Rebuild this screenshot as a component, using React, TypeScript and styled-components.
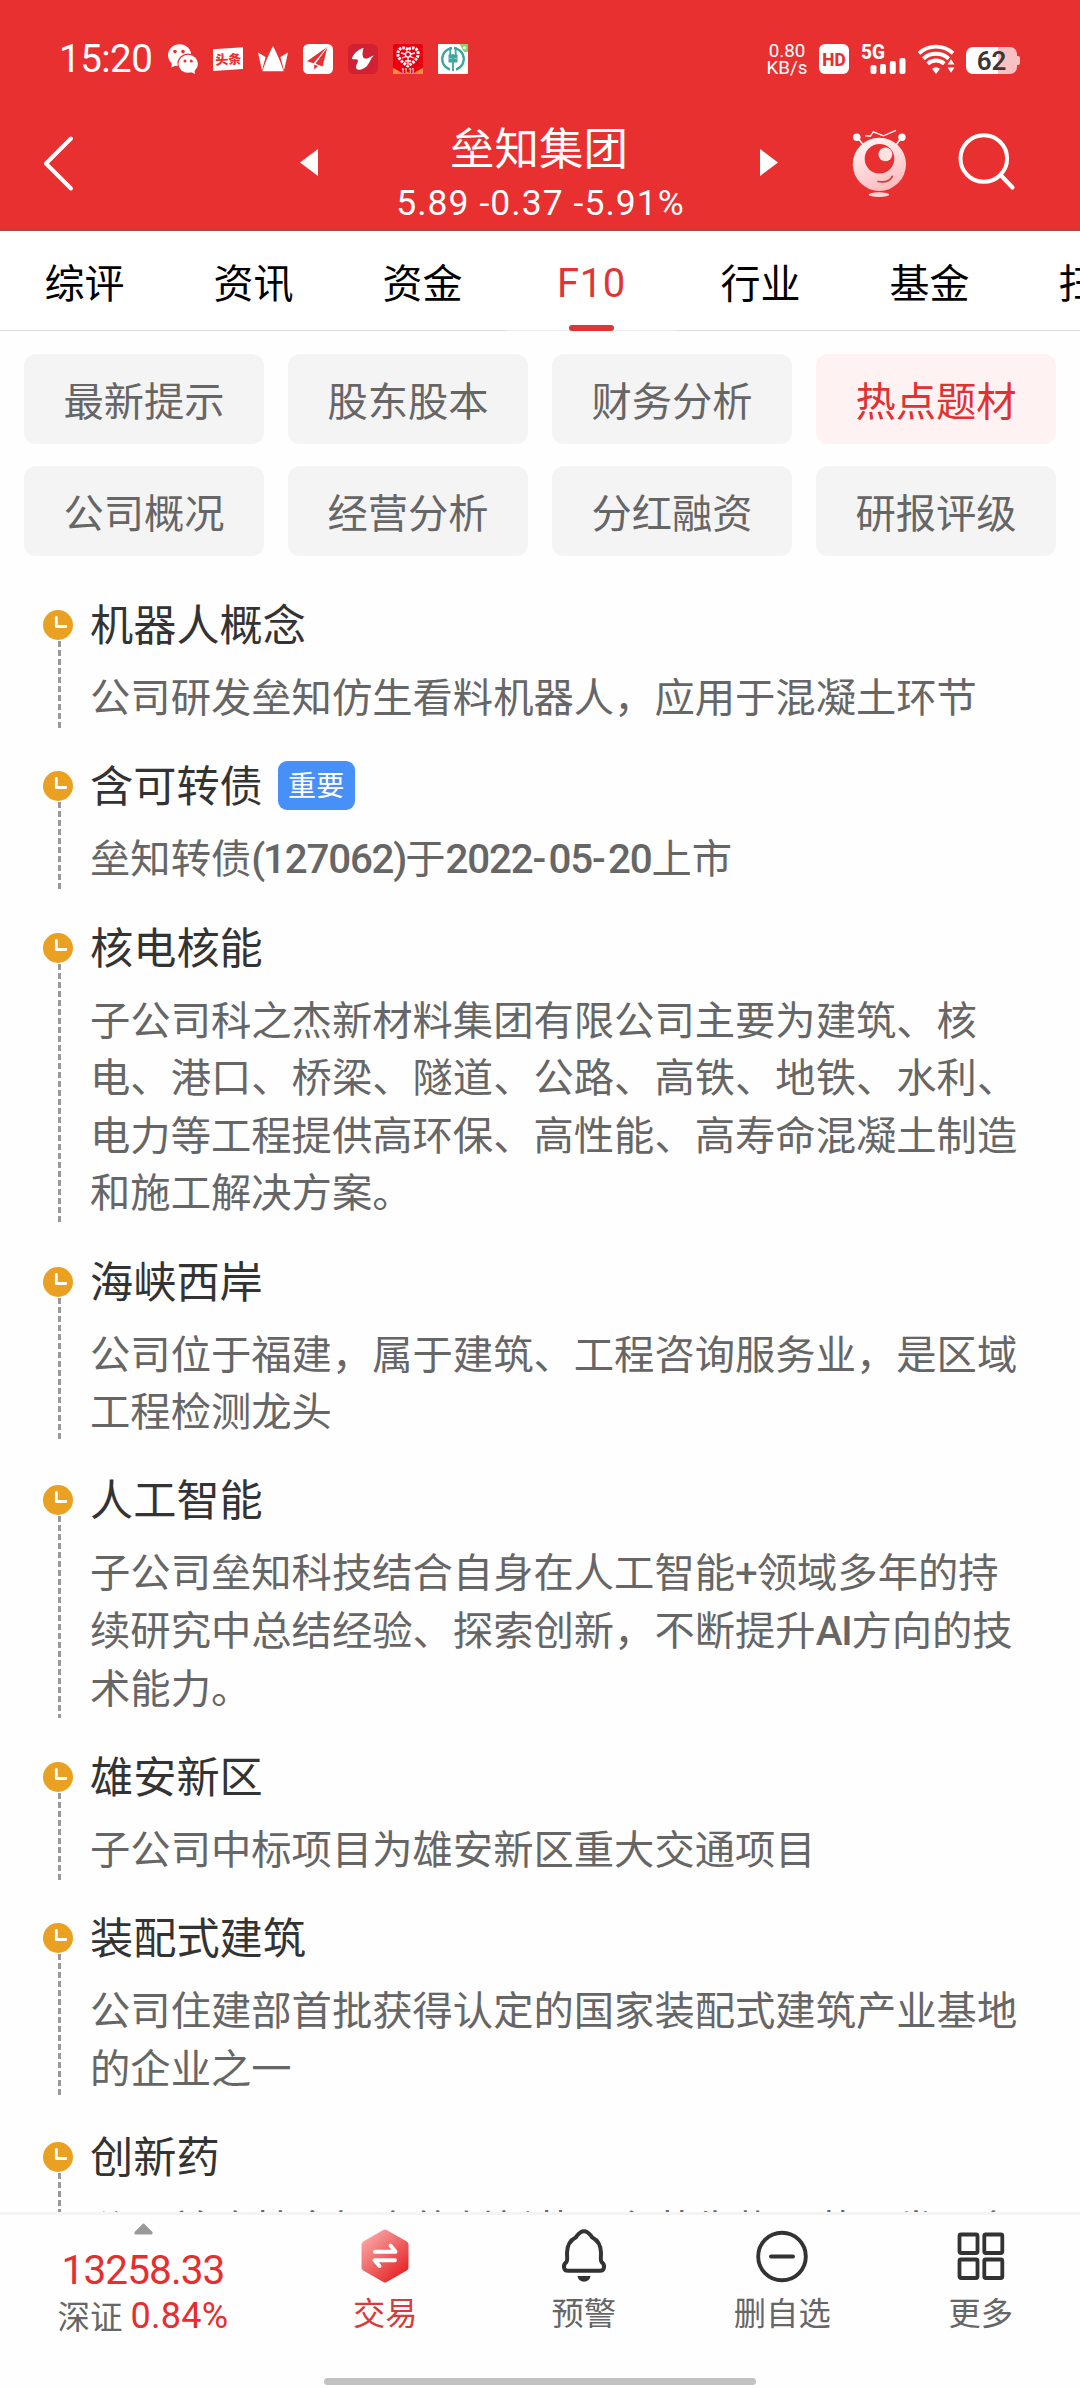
import React from 'react';
import styled, { createGlobalStyle, css } from 'styled-components';

const RED = '#e83031';

const GlobalStyle = createGlobalStyle`
  * { box-sizing: border-box; }
  html, body { margin: 0; padding: 0; background: #fefefe; }
  body { font-family: "Noto Sans CJK SC", "Noto Sans", sans-serif; overflow: hidden; }
`;

const latin = css`
  font-family: Roboto, "Noto Sans CJK SC", sans-serif;
`;

const Screen = styled.div`
  width: 1080px;
  height: 2388px;
  display: flex;
  flex-direction: column;
  overflow: hidden;
  background: #fefefe;
`;

/* ---------- header ---------- */

const Header = styled.header`
  height: 231px;
  flex: none;
  display: flex;
  flex-direction: column;
  background: ${RED};
  border-bottom: 1px solid #a04c4c;
  color: #fff;
`;

const StatusBar = styled.div`
  height: 118px;
  flex: none;
  display: flex;
  justify-content: space-between;
  align-items: center;
  padding: 0 60px 0 59px;
  svg { display: block; flex: none; }
`;

const StatusGroup = styled.div<{ $gap: number }>`
  display: flex;
  align-items: center;
  gap: ${(p) => p.$gap}px;
`;

const Time = styled.span`
  ${latin}
  width: 94px;
  font-size: 38.5px;
  line-height: 44px;
  letter-spacing: -0.5px;
  white-space: nowrap;
`;

const Speed = styled.div`
  ${latin}
  width: 42px;
  padding-top: 1px;
  font-size: 18.8px;
  line-height: 17px;
  text-align: center;
  white-space: nowrap;
`;

const Battery = styled.div`
  ${latin}
  display: flex;
  align-items: center;
  margin-top: 3px;
  &::after {
    content: '';
    width: 3px;
    height: 9px;
    border-radius: 0 2px 2px 0;
    background: #f9c1c1;
  }
`;

const BatteryBody = styled.div`
  width: 51px;
  height: 27px;
  border-radius: 7px;
  background: linear-gradient(90deg, #fff 0 32px, #f9c1c1 32px);
  color: #3c3636;
  font-size: 26px;
  font-weight: 600;
  line-height: 28px;
  text-align: center;
`;

const NavBar = styled.div`
  flex: 1;
  display: flex;
  align-items: stretch;
  svg { display: block; flex: none; }
`;

const BackSlot = styled.div`
  width: 300px;
  padding: 17px 0 0 42px;
`;

const StockSwitch = styled.div`
  width: 478px;
  display: flex;
  justify-content: space-between;
  > svg { margin-top: 31px; }
`;

const StockTitle = styled.div`
  display: flex;
  flex-direction: column;
  align-items: center;
  padding-top: 3px;
`;

const StockName = styled.div`
  font-size: 44.5px;
  line-height: 50px;
`;

const StockQuote = styled.div`
  ${latin}
  margin: 12px 0 0 3px;
  font-size: 35.5px;
  line-height: 40px;
  letter-spacing: 1.05px;
  white-space: nowrap;
`;

const NavActions = styled.div`
  display: flex;
  gap: 49px;
  padding: 11px 0 0 73px;
`;

/* ---------- tabs ---------- */

const Tabs = styled.nav`
  height: 100px;
  flex: none;
  display: flex;
  border-bottom: 1px solid #dedede;
  background: #fff;
`;

const Tab = styled.div<{ $active?: boolean }>`
  position: relative;
  width: 169px;
  height: 100px;
  flex: none;
  text-align: center;
  font-size: 40px;
  line-height: 101px;
  color: #000;
  ${(p) =>
    p.$active &&
    css`
      ${latin}
      line-height: 106px;
      letter-spacing: 0.6px;
      color: #df3535;
      border-bottom: 1px solid #eee;
      &::after {
        content: '';
        position: absolute;
        left: 62px;
        bottom: -1px;
        width: 45px;
        height: 6px;
        border-radius: 3px;
        background: #df3535;
      }
    `}
`;

/* ---------- section grid ---------- */

const Sections = styled.div`
  flex: none;
  display: grid;
  grid-template-columns: repeat(4, 240px);
  grid-auto-rows: 90px;
  gap: 22px 24px;
  padding: 23px 24px 0;
`;

const Section = styled.div<{ $active?: boolean }>`
  border-radius: 12px;
  background: ${(p) => (p.$active ? '#fef3f2' : '#f4f4f4')};
  color: ${(p) => (p.$active ? '#e03232' : '#666')};
  font-size: 40.3px;
  line-height: 90px;
  text-align: center;
`;

/* ---------- timeline ---------- */

const Timeline = styled.main`
  flex: 1;
  min-height: 0;
  overflow: hidden;
  padding: 40px 0 0 43px;
`;

const Entry = styled.article<{ $lines: number }>`
  display: flex;
  gap: 17px;
  height: ${(p) => 103.68 + p.$lines * 57.6}px;
`;

const Rail = styled.div<{ $lines: number }>`
  width: 30px;
  display: flex;
  flex-direction: column;
  align-items: center;
  padding-top: 14px;
  svg { display: block; flex: none; }
  &::after {
    content: '';
    width: 3px;
    height: ${(p) => 29 + p.$lines * 57.6}px;
    margin: 1px 0 0 2px;
    background: repeating-linear-gradient(180deg, #999 0 6px, transparent 6px 9px);
  }
`;

const EntryBody = styled.div`
  flex: 1;
  min-width: 0;
`;

const EntryTitle = styled.h2`
  display: flex;
  align-items: center;
  gap: 15px;
  height: 56px;
  margin: 0;
  font-size: 43.2px;
  font-weight: 400;
  line-height: 52px;
  color: #333;
  > span:first-child { margin-top: -4px; }
`;

const Badge = styled.span`
  width: 77px;
  height: 49px;
  border-radius: 9px;
  background: #4690f7;
  color: #fff;
  font-size: 28.2px;
  line-height: 46px;
  text-align: center;
`;

const EntryText = styled.p`
  margin: 14px 0 0;
  font-size: 40.32px;
  line-height: 57.6px;
  color: #666;
  white-space: pre;
`;

const Num = styled.span<{ $track?: number; $weight?: number }>`
  font-family: Roboto, sans-serif;
  font-weight: ${(p) => p.$weight ?? 500};
  letter-spacing: ${(p) => p.$track ?? -1.2}px;
  line-height: 0;
`;

/* ---------- bottom bar ---------- */

const Bottom = styled.footer`
  height: 176px;
  flex: none;
  display: flex;
  flex-direction: column;
  align-items: center;
  border-top: 3px solid #f4f4f4;
  background: #fefefe;
  svg { display: block; flex: none; }
`;

const BottomRow = styled.div`
  width: 1080px;
  height: 163px;
  display: flex;
`;

const IndexCell = styled.div`
  width: 286px;
  display: flex;
  flex-direction: column;
  align-items: center;
  padding-top: 8px;
`;

const IndexValue = styled.div`
  ${latin}
  margin-top: 12px;
  font-size: 40.5px;
  line-height: 46px;
  letter-spacing: -0.9px;
  color: #e62e2f;
`;

const IndexChange = styled.div`
  display: flex;
  gap: 8px;
  margin-top: 2px;
  font-size: 32.5px;
  line-height: 40px;
  color: #666;
  span {
    ${latin}
    font-size: 36px;
    letter-spacing: 0.3px;
    line-height: 42px;
    color: #e62e2f;
  }
`;

const Action = styled.div<{ $accent?: boolean }>`
  width: 198.5px;
  display: flex;
  flex-direction: column;
  align-items: center;
  padding-top: 14px;
  gap: 6px;
  font-size: 32.3px;
  line-height: 44px;
  color: ${(p) => (p.$accent ? '#d93b3b' : '#666')};
`;

const HomeIndicator = styled.div`
  width: 432px;
  height: 7px;
  border-radius: 4px;
  background: #c2c2c2;
`;

/* ---------- icons ---------- */

const WeChat = () => (
  <svg width="30" height="30" viewBox="0 0 30 30">
    <ellipse cx="11.6" cy="11.2" rx="11.6" ry="10.9" fill="#fff" />
    <path d="M4 18 L3.4 23.6 L10 20.5Z" fill="#fff" />
    <circle cx="7" cy="7.6" r="1.8" fill={RED} />
    <circle cx="15" cy="7.6" r="1.8" fill={RED} />
    <ellipse cx="20.2" cy="19.6" rx="10.8" ry="10.2" fill={RED} />
    <ellipse cx="20.2" cy="19.8" rx="9.8" ry="9" fill="#fff" />
    <path d="M21 27 L27 30 L26 24Z" fill="#fff" />
    <circle cx="17" cy="17" r="1.5" fill={RED} />
    <circle cx="23.3" cy="17" r="1.5" fill={RED} />
  </svg>
);

const Toutiao = () => (
  <svg width="30" height="30" viewBox="0 0 30 30">
    <path d="M0 5.2 L30 3.2 V25 L0 27Z" fill="#fff" />
    <text x="2.2" y="20.2" fontSize="13" fontWeight="900" fill={RED} transform="rotate(-3 15 15)">头条</text>
  </svg>
);

const Crown = () => (
  <svg width="30" height="30" viewBox="0 0 30 30">
    <path d="M0 8.6 L7.6 13 L4 26.5Z M30 8.6 L22.4 13 L26 26.5Z" fill="#fff" />
    <path d="M15 2 C17.5 7 22.5 17 25.6 27.2 H4.4 C7.5 17 12.5 7 15 2Z" fill="#fff" />
  </svg>
);

const Plane = () => (
  <svg width="30" height="30" viewBox="0 0 30 30">
    <rect width="30" height="30" rx="5.5" fill="#fff" />
    <path d="M24.5 2.8 L4 17.2 L10.6 19.2Z M24.5 2.8 L12.4 19.8 L19.6 22.6Z M11 20.4 L11.4 25.6 L15 22Z" fill={RED} />
    <path d="M24.5 2.8 L11 20.8" stroke="#fff" strokeWidth="0.9" />
  </svg>
);

const Bird = () => (
  <svg width="30" height="30" viewBox="0 0 30 30">
    <rect width="30" height="30" rx="5.5" fill="#d12233" />
    <path d="M15.5 4 C11 5 5 9.5 4 14.5 C4.5 16.5 8.5 14 9.8 16 C10.6 18.5 7 21.5 8.3 24.5 C10.5 27 15 25.5 18.5 22.5 C21.5 19.5 22 15 26 11.2 C23 12.2 20 15 17.2 14.6 C13.5 14 14.5 8 15.5 4Z" fill="#fff" />
  </svg>
);

const Heart = () => (
  <svg width="30" height="30" viewBox="0 0 30 30">
    <rect width="30" height="30" rx="2" fill="#e8000f" />
    <path d="M0 24 Q3 25 9 29 H21 Q27 25 30 24 V30 H0Z" fill="#f78a3c" />
    <path
      d="M15 6 C12 2.5 5 3 4.8 10 C5 15 11 19.5 15 22 C19 19.5 25 15 25.2 10 C25 3 18 2.5 15 6Z"
      fill="none"
      stroke="#fff"
      strokeWidth="3"
      strokeDasharray="2.6 1"
    />
    <circle cx="15" cy="10.5" r="2.6" fill="none" stroke="#fff" strokeWidth="1.4" />
    <path d="M8 9 L12 10 M18 10 L22 9 M9 14 L13 12.5 M17 12.5 L21 14 M15 13 V20 M12 17 H18" stroke="#fff" strokeWidth="1.3" />
    <text x="15" y="28.6" fontSize="6.6" fontWeight="700" fontFamily="Roboto, sans-serif" textAnchor="middle" textLength="13" lengthAdjust="spacingAndGlyphs" fill="#fff">11.11</text>
  </svg>
);

const BankIcon = () => (
  <svg width="30" height="30" viewBox="0 0 30 30">
    <rect width="30" height="30" fill="#fff" />
    <circle cx="15" cy="15" r="10.8" fill="none" stroke="#40a59b" strokeWidth="2.3" />
    <path d="M12.3 3 V11 M17.7 3 V11" stroke="#40a59b" strokeWidth="1.8" />
    <path d="M10.5 10.5 H19.5 V18.5 H10.5Z" fill="#40a59b" />
    <path d="M15 3 V10 M13 19 V27 M17 19 V27" stroke="#fff" strokeWidth="2" />
    <path d="M10.5 14.5 H19.5" stroke="#9ed4ce" strokeWidth="0.8" />
    <path d="M15 10 V25" stroke="#40a59b" strokeWidth="1.8" />
    <path d="M21.5 0 H30 V8 H26Z" fill="#8bd06c" />
    <circle cx="26.5" cy="3.8" r="1.7" fill="#d9f2cd" />
  </svg>
);

const HdSvg = styled.svg`
  margin-right: 1px;
`;

const HdIcon = () => (
  <HdSvg width="30" height="30" viewBox="0 0 30 30">
    <rect width="30" height="30" rx="6" fill="#fff" />
    <text x="15" y="21.7" fontSize="18.5" fontWeight="800" fontFamily="Roboto, sans-serif" textAnchor="middle" textLength="23.5" lengthAdjust="spacingAndGlyphs" fill={RED}>HD</text>
  </HdSvg>
);

const SignalSvg = styled.svg`
  overflow: visible;
`;

const Signal = () => (
  <SignalSvg width="46" height="30" viewBox="0 0 46 30">
    <text x="0" y="14.5" fontSize="20" fontWeight="800" fontFamily="Roboto, sans-serif" textLength="24" lengthAdjust="spacingAndGlyphs" fill="#fff">5G</text>
    <g fill="#fff">
      <rect x="9.5" y="21" width="6" height="9" rx="2" />
      <rect x="19" y="20" width="6" height="10" rx="2" />
      <rect x="28.8" y="17" width="6" height="13" rx="2" />
      <rect x="38.5" y="14" width="6" height="16" rx="2" />
    </g>
  </SignalSvg>
);

const Wifi = () => (
  <svg width="37" height="30" viewBox="0 0 37 30">
    <g fill="none" stroke="#fff" strokeWidth="3.9">
      <path d="M1 9.3 A25 25 0 0 1 35 9.3" />
      <path d="M5.3 14.7 A18.7 18.7 0 0 1 30.7 14.7" />
      <path d="M9.7 19.7 A12.4 12.4 0 0 1 26.3 19.7" />
    </g>
    <path d="M14 24.8 Q18 21.8 22 24.8 L18 30Z" fill="#fff" />
    <path d="M28 22 L33 13.5 L38 22 V30 H28Z" fill={RED} />
    <path d="M29.5 20.5 L33 15.3 L36.5 20.5Z M29.5 23.5 L33 28.8 L36.5 23.5Z" fill="#fff" />
  </svg>
);

const Back = () => (
  <svg width="34" height="58" viewBox="0 0 34 58">
    <path d="M29 3.5 L4 28.5 L29 53.5" fill="none" stroke="#fff" strokeWidth="4" strokeLinecap="round" strokeLinejoin="round" />
  </svg>
);

const Triangle = ({ flip }: { flip?: boolean }) => (
  <svg width="18" height="27" viewBox="0 0 18 27">
    <path d={flip ? 'M0 0 L18 13.5 L0 27Z' : 'M18 0 L0 13.5 L18 27Z'} fill="#fff" />
  </svg>
);

const Robot = () => (
  <svg width="56" height="70" viewBox="851 129 56 70">
    <defs>
      <linearGradient id="robot" x1="0.3" y1="0" x2="0.7" y2="1">
        <stop offset="0" stopColor="#fff5f5" />
        <stop offset="1" stopColor="#fdb9bb" />
      </linearGradient>
    </defs>
    <path d="M857 137 L863.5 145 M902 137 L896 145" stroke="#fff" strokeWidth="1.5" />
    <circle cx="856.8" cy="137.3" r="3.7" fill="#fff" />
    <circle cx="902" cy="137.3" r="3.7" fill="#fff" />
    <path d="M865 135.8 L870.5 136 L873.3 131.8 L883.5 135.8 L896 130.3" fill="none" stroke="#fff" strokeWidth="1.3" />
    <circle cx="879.4" cy="164.3" r="26.6" fill="url(#robot)" />
    <circle cx="879.5" cy="158.8" r="14.8" fill={RED} />
    <circle cx="885.4" cy="154.3" r="6.9" fill="#ffe3e3" />
    <path d="M878 181.5 Q889 183.5 892.3 176.3" fill="none" stroke="#d9393b" strokeWidth="1.7" strokeLinecap="round" />
    <ellipse cx="879" cy="194.6" rx="10.3" ry="2.3" fill="#ffd6d6" />
  </svg>
);

const Search = () => (
  <svg width="60" height="62" viewBox="956 131 60 62">
    <circle cx="983.8" cy="160.5" r="23.3" fill="none" stroke="#fff" strokeWidth="4" />
    <path d="M1001.5 178 L1012.5 189.5" stroke="#fff" strokeWidth="4.2" strokeLinecap="round" />
  </svg>
);

const Clock = () => (
  <svg width="30" height="30" viewBox="0 0 30 30">
    <circle cx="15" cy="15" r="15" fill="#eaa020" />
    <path d="M13.3 7.3 V16.5 H22.8" fill="none" stroke="#fff" strokeWidth="2.8" strokeLinecap="round" strokeLinejoin="round" />
  </svg>
);

const UpMark = () => (
  <svg width="19" height="12" viewBox="0 0 19 12">
    <path d="M9.5 1.5 L17.5 9.5 V10.5 H1.5 V9.5Z" fill="#999" stroke="#999" strokeWidth="2" strokeLinejoin="round" />
  </svg>
);

const TradeIcon = () => (
  <svg width="48" height="54" viewBox="0 0 48 54">
    <defs>
      <linearGradient id="trade" gradientUnits="userSpaceOnUse" x1="4" y1="6" x2="42" y2="46">
        <stop offset="0" stopColor="#f9a9a9" />
        <stop offset="1" stopColor="#e72527" />
      </linearGradient>
    </defs>
    <path d="M24 4 L44 15.5 V38.5 L24 50 L4 38.5 V15.5Z" fill="url(#trade)" stroke="url(#trade)" strokeWidth="7" strokeLinejoin="round" />
    <path d="M14 22.7 H34.5 L29.5 16.5 M34 31.3 H13.5 L18.5 37" fill="none" stroke="#fff" strokeWidth="3.9" strokeLinecap="round" strokeLinejoin="round" />
  </svg>
);

const Bell = () => (
  <svg width="46" height="54" viewBox="0 0 46 54">
    <path
      d="M7 41.8 C2.5 41.8 1.5 36 5.3 33.2 C6.8 31.5 6 28 6 24 C6 16 9.5 11 15 8.2 C17 5.5 18.5 2.2 23 2.2 C27.5 2.2 29 5.5 31 8.2 C36.5 11 40 16 40 24 C40 28 39.2 31.5 40.7 33.2 C44.5 36 43.5 41.8 39 41.8 Z"
      fill="none"
      stroke="#333"
      strokeWidth="4"
      strokeLinejoin="round"
    />
    <path d="M16.5 47 H29.5 C28.5 54.5 17.5 54.5 16.5 47Z" fill="#333" />
  </svg>
);

const Remove = () => (
  <svg width="54" height="54" viewBox="0 0 54 54">
    <circle cx="27" cy="27.5" r="23.8" fill="none" stroke="#333" strokeWidth="3.9" />
    <path d="M16 27.5 H38" stroke="#333" strokeWidth="4" strokeLinecap="round" />
  </svg>
);

const More = () => (
  <svg width="48" height="54" viewBox="0 0 48 54">
    <g fill="none" stroke="#333" strokeWidth="3.8">
      <rect x="2.5" y="5.5" width="18" height="18.5" rx="1.5" />
      <rect x="27.3" y="5.5" width="18" height="18.5" rx="1.5" />
      <rect x="2.5" y="30.5" width="18" height="18.5" rx="1.5" />
      <rect x="27.3" y="30.5" width="18" height="18.5" rx="1.5" />
    </g>
  </svg>
);

/* ---------- data ---------- */

const tabs = ['综评', '资讯', '资金', 'F10', '行业', '基金', '扫雷'];

const sections = ['最新提示', '股东股本', '财务分析', '热点题材', '公司概况', '经营分析', '分红融资', '研报评级'];

interface Topic {
  title: string;
  important?: boolean;
  lines: React.ReactNode[];
}

const topics: Topic[] = [
  { title: '机器人概念', lines: ['公司研发垒知仿生看料机器人，应用于混凝土环节'] },
  {
    title: '含可转债',
    important: true,
    lines: [
      <>
        垒知转债<Num $track={-2.2}>(</Num><Num>127062</Num><Num $track={-2.2}>)</Num>于
        <Num>2022</Num><Num $track={2.4}>-</Num><Num>05</Num><Num $track={2.4}>-</Num><Num>20</Num>上市
      </>,
    ],
  },
  {
    title: '核电核能',
    lines: [
      '子公司科之杰新材料集团有限公司主要为建筑、核',
      '电、港口、桥梁、隧道、公路、高铁、地铁、水利、',
      '电力等工程提供高环保、高性能、高寿命混凝土制造',
      '和施工解决方案。',
    ],
  },
  { title: '海峡西岸', lines: ['公司位于福建，属于建筑、工程咨询服务业，是区域', '工程检测龙头'] },
  {
    title: '人工智能',
    lines: [
      <>子公司垒知科技结合自身在人工智能<Num $weight={400}>+</Num>领域多年的持</>,
      <>续研究中总结经验、探索创新，不断提升<Num>AI</Num>方向的技</>,
      '术能力。',
    ],
  },
  { title: '雄安新区', lines: ['子公司中标项目为雄安新区重大交通项目'] },
  { title: '装配式建筑', lines: ['公司住建部首批获得认定的国家装配式建筑产业基地', '的企业之一'] },
  { title: '创新药', lines: ['公司并购基金投资的创新药，主营生物医药研发服务'] },
];

const actions = [
  { label: '交易', icon: <TradeIcon />, accent: true },
  { label: '预警', icon: <Bell /> },
  { label: '删自选', icon: <Remove /> },
  { label: '更多', icon: <More /> },
];

export default function App() {
  return (
    <Screen>
      <GlobalStyle />
      <Header>
        <StatusBar>
          <StatusGroup $gap={15}>
            <Time>15:20</Time>
            <WeChat />
            <Toutiao />
            <Crown />
            <Plane />
            <Bird />
            <Heart />
            <BankIcon />
          </StatusGroup>
          <StatusGroup $gap={11}>
            <Speed>
              <div>0.80</div>
              <div>KB/s</div>
            </Speed>
            <HdIcon />
            <Signal />
            <Wifi />
            <Battery>
              <BatteryBody>62</BatteryBody>
            </Battery>
          </StatusGroup>
        </StatusBar>
        <NavBar>
          <BackSlot>
            <Back />
          </BackSlot>
          <StockSwitch>
            <Triangle />
            <StockTitle>
              <StockName>垒知集团</StockName>
              <StockQuote>5.89 -0.37 -5.91%</StockQuote>
            </StockTitle>
            <Triangle flip />
          </StockSwitch>
          <NavActions>
            <Robot />
            <Search />
          </NavActions>
        </NavBar>
      </Header>

      <Tabs>
        {tabs.map((t) => (
          <Tab key={t} $active={t === 'F10'}>
            {t}
          </Tab>
        ))}
      </Tabs>

      <Sections>
        {sections.map((s) => (
          <Section key={s} $active={s === '热点题材'}>
            {s}
          </Section>
        ))}
      </Sections>

      <Timeline>
        {topics.map((topic) => (
          <Entry key={topic.title} $lines={topic.lines.length}>
            <Rail $lines={topic.lines.length}>
              <Clock />
            </Rail>
            <EntryBody>
              <EntryTitle>
                <span>{topic.title}</span>
                {topic.important && <Badge>重要</Badge>}
              </EntryTitle>
              <EntryText>
                {topic.lines.map((line, i) => (
                  <React.Fragment key={i}>
                    {i > 0 && '\n'}
                    {line}
                  </React.Fragment>
                ))}
              </EntryText>
            </EntryBody>
          </Entry>
        ))}
      </Timeline>

      <Bottom>
        <BottomRow>
          <IndexCell>
            <UpMark />
            <IndexValue>13258.33</IndexValue>
            <IndexChange>
              深证<span>0.84%</span>
            </IndexChange>
          </IndexCell>
          {actions.map((a) => (
            <Action key={a.label} $accent={a.accent}>
              {a.icon}
              {a.label}
            </Action>
          ))}
        </BottomRow>
        <HomeIndicator />
      </Bottom>
    </Screen>
  );
}
